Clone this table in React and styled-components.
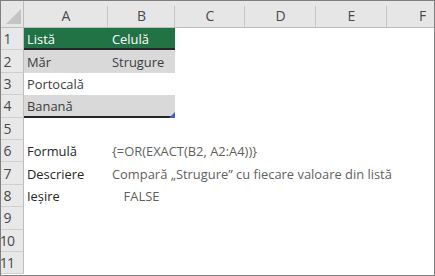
import React from "react";
import styled, { createGlobalStyle } from "styled-components";

const Global = createGlobalStyle`
  html, body { margin: 0; padding: 0; background: #fff; }
  body { font-family: "Open Sans", "Noto Sans", sans-serif; }
`;

const Frame = styled.div`
  width: 435px;
  height: 276px;
  box-sizing: border-box;
  border: 1px solid #7f7f7f;
  overflow: hidden;
  background: #fff;
`;

const Sheet = styled.div`
  display: grid;
  grid-template-columns: 23px 84px 67px 70px 71px 71px 71px;
  grid-template-rows: 27px repeat(11, 22.4px);
  font-size: 12.9px;
`;

const Corner = styled.div`
  background: #e6e6e6;
  border-right: 1px solid #bdbdbd;
  border-bottom: 1px solid #bdbdbd;
  box-sizing: border-box;
  display: flex;
  align-items: flex-end;
  justify-content: flex-end;
  padding: 0 2px 3px 0;
`;

const ColHead = styled.div`
  background:
    linear-gradient(#c4c4c4, #c4c4c4) right bottom / 1px calc(100% - 5px) no-repeat,
    #e6e6e6;
  border-bottom: 1px solid #bdbdbd;
  box-sizing: border-box;
  color: #4a4a4a;
  font-size: 14px;
  display: flex;
  align-items: center;
  justify-content: center;
  padding-top: 2px;
`;

const RowHead = styled.div`
  background: #e8e8e8;
  border-right: 1px solid #bdbdbd;
  border-bottom: 1px solid #cfcfcf;
  box-sizing: border-box;
  color: #4a4a4a;
  font-size: 14px;
  display: flex;
  align-items: center;
  justify-content: center;
  padding-right: 10px;
  letter-spacing: -0.8px;
  overflow: visible;
  white-space: nowrap;
`;

const fills = { green: "#217346", gray: "#d9d9d9", none: "transparent" };
const tones = { white: "#ffffff", body: "#3c3c3c", label: "#262626", value: "#5f5f5f" };

const Cell = styled.div`
  position: relative;
  background: ${(p) => fills[p.$fill || "none"]};
  color: ${(p) => tones[p.$tone || "body"]};
  border-bottom: ${(p) => (p.$rule ? "2px solid #262626" : "none")};
  box-sizing: border-box;
  display: flex;
  align-items: center;
  justify-content: ${(p) => (p.$center ? "center" : "flex-start")};
  padding-left: ${(p) => (p.$center ? 0 : p.$pad ?? 3)}px;
  padding-top: ${(p) => (p.$rule ? 2 : 0)}px;
  white-space: nowrap;
  overflow: visible;
  min-width: 0;
`;

const Handle = styled.svg`
  position: absolute;
  right: 0;
  bottom: -2px;
  width: 6px;
  height: 6px;
  z-index: 1;
`;

const cols = ["A", "B", "C", "D", "E", "F"];

const rows = [
  { a: { t: "Listă", fill: "green", tone: "white" }, b: { t: "Celulă", fill: "green", tone: "white" }, rule: true },
  { a: { t: "Măr", fill: "gray" }, b: { t: "Strugure", fill: "gray" } },
  { a: { t: "Portocală" }, b: { t: "" } },
  { a: { t: "Banană", fill: "gray" }, b: { t: "", fill: "gray" }, rule: true, handle: true },
  { a: { t: "" }, b: { t: "" } },
  { a: { t: "Formulă", tone: "label" }, b: { t: "{=OR(EXACT(B2, A2:A4))}", tone: "value" } },
  { a: { t: "Descriere", tone: "label" }, b: { t: "Compară „Strugure” cu fiecare valoare din listă", tone: "value" } },
  { a: { t: "Ieșire", tone: "label" }, b: { t: "FALSE", tone: "value", center: true } },
  { a: { t: "" }, b: { t: "" } },
  { a: { t: "" }, b: { t: "" } },
  { a: { t: "" }, b: { t: "" } },
];

export default function App() {
  return (
    <>
      <Global />
      <Frame>
        <Sheet>
          <Corner>
            <svg width="15" height="15" viewBox="0 0 15 15">
              <polygon points="15,0 15,15 0,15" fill="#c4c4c4" />
            </svg>
          </Corner>
          {cols.map((c) => (
            <ColHead key={c}>{c}</ColHead>
          ))}
          {rows.map((r, i) => (
            <React.Fragment key={i}>
              <RowHead>{i + 1}</RowHead>
              <Cell $fill={r.a.fill} $tone={r.a.tone} $rule={r.rule}>
                {r.a.t}
              </Cell>
              <Cell $fill={r.b.fill} $tone={r.b.tone} $rule={r.rule} $pad={4} $center={r.b.center}>
                {r.b.t}
                {r.handle && (
                  <Handle viewBox="0 0 6 6">
                    <polygon points="6,0 6,6 0,6" fill="#3f63c0" />
                  </Handle>
                )}
              </Cell>
              <Cell />
              <Cell />
              <Cell />
              <Cell />
            </React.Fragment>
          ))}
        </Sheet>
      </Frame>
    </>
  );
}
